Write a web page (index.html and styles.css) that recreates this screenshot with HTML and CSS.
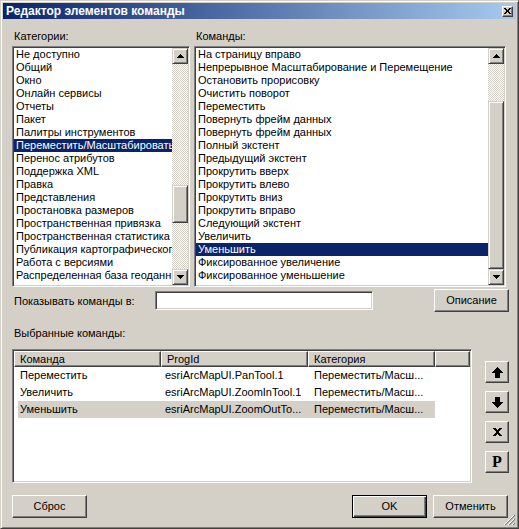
FILE: index.html
```html
<!DOCTYPE html>
<html>
<head>
<meta charset="utf-8">
<link rel="stylesheet" href="styles.css">
</head>
<body>
<div class="window">
  <div class="titlebar">
    <span class="title">Редактор элементов команды</span>
    <span class="close"><svg width="7" height="6" viewBox="0 0 7 6" shape-rendering="crispEdges"><path d="M0 0h2v1h1v1h1V1h1V0h2v1H6v1H5v2h1v1h1v1H5V5H4V4H3v1H2v1H0V5h1V4h1V2H1V1H0z"/></svg></span>
  </div>
  <div class="content">
    <div class="lists">
      <div class="col col-left">
        <div class="label">Категории:</div>
        <div class="listbox">
          <div class="items">
            <div class="item">Не доступно</div>
            <div class="item">Общий</div>
            <div class="item">Окно</div>
            <div class="item">Онлайн сервисы</div>
            <div class="item">Отчеты</div>
            <div class="item">Пакет</div>
            <div class="item">Палитры инструментов</div>
            <div class="item sel">Переместить/Масштабировать</div>
            <div class="item">Перенос атрибутов</div>
            <div class="item">Поддержка XML</div>
            <div class="item">Правка</div>
            <div class="item">Представления</div>
            <div class="item">Простановка размеров</div>
            <div class="item">Пространственная привязка</div>
            <div class="item">Пространственная статистика</div>
            <div class="item">Публикация картографического</div>
            <div class="item">Работа с версиями</div>
            <div class="item">Распределенная база геоданных</div>
          </div>
          <div class="vscroll">
            <div class="sb-btn"><svg width="7" height="4" viewBox="0 0 7 4" shape-rendering="crispEdges"><path d="M3 0h1v1h1v1h1v1h1v1H0V3h1V2h1V1h1z"/></svg></div>
            <div class="sb-track"><div class="sb-thumb thumb-left"></div></div>
            <div class="sb-btn"><svg width="7" height="4" viewBox="0 0 7 4" shape-rendering="crispEdges"><path d="M0 0h7v1H6v1H5v1H4v1H3V3H2V2H1V1H0z"/></svg></div>
          </div>
        </div>
      </div>
      <div class="col col-right">
        <div class="label label-right">Команды:</div>
        <div class="listbox">
          <div class="items">
            <div class="item">На страницу вправо</div>
            <div class="item">Непрерывное Масштабирование и Перемещение</div>
            <div class="item">Остановить прорисовку</div>
            <div class="item">Очистить поворот</div>
            <div class="item">Переместить</div>
            <div class="item">Повернуть фрейм данных</div>
            <div class="item">Повернуть фрейм данных</div>
            <div class="item">Полный экстент</div>
            <div class="item">Предыдущий экстент</div>
            <div class="item">Прокрутить вверх</div>
            <div class="item">Прокрутить влево</div>
            <div class="item">Прокрутить вниз</div>
            <div class="item">Прокрутить вправо</div>
            <div class="item">Следующий экстент</div>
            <div class="item">Увеличить</div>
            <div class="item sel">Уменьшить</div>
            <div class="item">Фиксированное увеличение</div>
            <div class="item">Фиксированное уменьшение</div>
          </div>
          <div class="vscroll">
            <div class="sb-btn"><svg width="7" height="4" viewBox="0 0 7 4" shape-rendering="crispEdges"><path d="M3 0h1v1h1v1h1v1h1v1H0V3h1V2h1V1h1z"/></svg></div>
            <div class="sb-track"><div class="sb-thumb thumb-right"></div></div>
            <div class="sb-btn"><svg width="7" height="4" viewBox="0 0 7 4" shape-rendering="crispEdges"><path d="M0 0h7v1H6v1H5v1H4v1H3V3H2V2H1V1H0z"/></svg></div>
          </div>
        </div>
      </div>
    </div>

    <div class="show-row">
      <div class="show-label">Показывать команды в:</div>
      <div class="field"></div>
      <div class="btn btn-desc">Описание</div>
    </div>

    <div class="label sel-label">Выбранные команды:</div>

    <div class="lv-row-wrap">
      <div class="listview">
        <div class="lv-header">
          <div class="hcell h1">Команда</div>
          <div class="hcell h2">ProgId</div>
          <div class="hcell h3">Категория</div>
          <div class="hcell h4"></div>
        </div>
        <div class="lv-row">
          <div class="c1">Переместить</div>
          <div class="c2">esriArcMapUI.PanTool.1</div>
          <div class="c3">Переместить/Масш...</div>
        </div>
        <div class="lv-row">
          <div class="c1">Увеличить</div>
          <div class="c2">esriArcMapUI.ZoomInTool.1</div>
          <div class="c3">Переместить/Масш...</div>
        </div>
        <div class="lv-row lv-sel">
          <div class="c1">Уменьшить</div>
          <div class="c2">esriArcMapUI.ZoomOutTo...</div>
          <div class="c3">Переместить/Масш...</div>
        </div>
      </div>
      <div class="side">
        <div class="sbtn"><svg width="11" height="11" viewBox="0 0 11 11" shape-rendering="crispEdges"><path d="M5 0h1v1h1v1h1v1h1v1h1v1h1v1H8v5H3V6H0V5h1V4h1V3h1V2h1V1h1z"/></svg></div>
        <div class="sbtn"><svg width="11" height="11" viewBox="0 0 11 11" shape-rendering="crispEdges"><path d="M3 0h5v5h3v1h-1v1H9v1H8v1H7v1H6v1H5v-1H4V9H3V8H2V7H1V6H0V5h3z"/></svg></div>
        <div class="sbtn"><svg width="9" height="8" viewBox="0 0 9 8" shape-rendering="crispEdges"><path d="M0 0h3v1h1v1h1V1h1V0h3v1H8v1H7v1H6v2h1v1h1v1h1v1H6V7H5V6H4v1H3v1H0V7h1V6h1V5h1V3H2V2H1V1H0z"/></svg></div>
        <div class="sbtn sbtn-p">P</div>
      </div>
    </div>

    <div class="bottom">
      <div class="btn">Сброс</div>
      <div class="btn btn-ok">OK</div>
      <div class="btn btn-cancel">Отменить</div>
    </div>
  </div>
  <svg class="grip" width="12" height="12" viewBox="0 0 12 12">
    <path d="M11 1L1 11M11 5L5 11M11 9L9 11" stroke="#808080" stroke-width="1.2"/>
    <path d="M10 1L0 11M10 5L4 11M10 9L8 11" stroke="#fff" stroke-width="1"/>
  </svg>
</div>
</body>
</html>
```

FILE: styles.css
```css
* { box-sizing: border-box; }
html, body { margin: 0; padding: 0; }
body {
  width: 519px;
  height: 529px;
  overflow: hidden;
  background: #d4d0c8;
  font-family: "Liberation Sans", Arial, sans-serif;
  font-size: 11px;
  color: #000;
}
.window {
  position: relative;
  width: 519px;
  height: 529px;
  border: 1px solid;
  border-color: #d4d0c8 #404040 #404040 #d4d0c8;
  box-shadow: inset 1px 1px #fff, inset -1px -1px #808080;
  padding: 2px;
  background: #d4d0c8;
  display: flex;
  flex-direction: column;
}
.titlebar {
  height: 16px;
  background: linear-gradient(to right, #0a246a, #a6caf0);
  display: flex;
  align-items: center;
  justify-content: space-between;
  padding: 0 3px 0 3px;
}
.title {
  color: #fff;
  font-weight: bold;
  font-size: 12px;
  line-height: 16px;
  white-space: nowrap;
}
.close {
  width: 11px;
  height: 11px;
  background: #d4d0c8;
  border: 1px solid;
  border-color: #fff #404040 #404040 #fff;
  box-shadow: inset -1px -1px #808080;
  display: flex;
  align-items: center;
  justify-content: center;
  padding-right: 1px;
  padding-bottom: 1px;
}
.content {
  padding: 11px 7px 0 9px;
  display: flex;
  flex-direction: column;
}
.lists { display: flex; }
.col-left { width: 178px; }
.col-right { width: 312px; margin-left: 4px; }
.label {
  line-height: 13px;
  height: 13px;
  padding-left: 2px;
  margin-bottom: 3px;
  white-space: nowrap;
}
.label-right { padding-left: 2px; }
.listbox {
  height: 241px;
  border: 1px solid;
  border-color: #808080 #fff #fff #808080;
  box-shadow: inset 1px 1px #404040, inset -1px -1px #d4d0c8;
  padding: 1px;
  background: #fff;
  display: flex;
}
.items {
  flex: 1;
  min-width: 0;
  overflow: hidden;
}
.item {
  height: 13px;
  line-height: 13px;
  padding-left: 2px;
  white-space: nowrap;
  overflow: hidden;
}
.item.sel { background: #0a246a; color: #fff; }
.vscroll {
  width: 16px;
  display: flex;
  flex-direction: column;
}
.sb-btn {
  height: 16px;
  flex: none;
  background: #d4d0c8;
  border: 1px solid;
  border-color: #d4d0c8 #404040 #404040 #d4d0c8;
  box-shadow: inset 1px 1px #fff, inset -1px -1px #808080;
  display: flex;
  align-items: center;
  justify-content: center;
}
.sb-track {
  flex: 1;
  display: flex;
  flex-direction: column;
  background: repeating-conic-gradient(#fff 0% 25%, #d4d0c8 0% 50%) 0 0 / 2px 2px;
}
.sb-thumb {
  background: #d4d0c8;
  border: 1px solid;
  border-color: #d4d0c8 #404040 #404040 #d4d0c8;
  box-shadow: inset 1px 1px #fff, inset -1px -1px #808080;
}
.thumb-left { margin-top: 121px; height: 38px; }
.thumb-right { margin-top: 37px; flex: 1; }

.show-row {
  display: flex;
  align-items: center;
  height: 23px;
  margin-top: 2px;
}
.show-label {
  width: 143px;
  padding-left: 2px;
  white-space: nowrap;
}
.field {
  width: 218px;
  height: 19px;
  background: #fff;
  border: 1px solid;
  border-color: #808080 #fff #fff #808080;
  box-shadow: inset 1px 1px #404040, inset -1px -1px #d4d0c8;
}
.btn {
  width: 75px;
  height: 23px;
  background: #d4d0c8;
  border: 1px solid;
  border-color: #fff #404040 #404040 #fff;
  box-shadow: inset -1px -1px #808080;
  display: flex;
  align-items: center;
  justify-content: center;
  line-height: 13px;
  white-space: nowrap;
}
.btn-desc { margin-left: auto; }
.sel-label { margin-top: 15px; margin-bottom: 9px; }

.lv-row-wrap { display: flex; height: 134px; }
.listview {
  width: 460px;
  height: 134px;
  background: #fff;
  border: 1px solid;
  border-color: #808080 #fff #fff #808080;
  box-shadow: inset 1px 1px #404040, inset -1px -1px #d4d0c8;
  padding: 1px;
  overflow: hidden;
}
.lv-header { display: flex; height: 16px; }
.hcell {
  height: 16px;
  background: #d4d0c8;
  border: 1px solid;
  border-color: #fff #404040 #404040 #fff;
  box-shadow: inset -1px -1px #808080;
  line-height: 14px;
  padding-left: 5px;
  white-space: nowrap;
  overflow: hidden;
}
.h1 { width: 147px; }
.h2 { width: 147px; }
.h3 { width: 127px; }
.h4 { width: 35px; }
.lv-row {
  display: flex;
  width: 417px;
  height: 17px;
  line-height: 17px;
  margin-left: 4px;
  white-space: nowrap;
}
.lv-row:first-of-type { margin-top: 0; }
.lv-header + .lv-row { margin-top: 0; }
.lv-sel { background: #d4d0c8; }
.c1 { width: 143px; padding-left: 2px; overflow: hidden; }
.c2 { width: 147px; padding-left: 4px; overflow: hidden; }
.c3 { width: 127px; padding-left: 6px; overflow: hidden; }

.side {
  margin-left: auto;
  padding-top: 12px;
  display: flex;
  flex-direction: column;
  gap: 8px;
}
.sbtn {
  width: 24px;
  height: 22px;
  background: #d4d0c8;
  border: 1px solid;
  border-color: #fff #404040 #404040 #fff;
  box-shadow: inset -1px -1px #808080;
  display: flex;
  align-items: center;
  justify-content: center;
}
.sbtn-p {
  font-family: "Liberation Serif", "Times New Roman", serif;
  font-weight: bold;
  font-size: 16px;
  line-height: 16px;
}

.bottom {
  display: flex;
  margin-top: 12px;
}
.btn-ok {
  margin-left: auto;
  border: 1px solid #000;
  box-shadow: inset 1px 1px #fff, inset -1px -1px #404040, inset -2px -2px #808080;
}
.btn-cancel { margin-left: 6px; margin-right: 1px; }

.grip {
  position: absolute;
  right: 2px;
  bottom: 2px;
}
```
